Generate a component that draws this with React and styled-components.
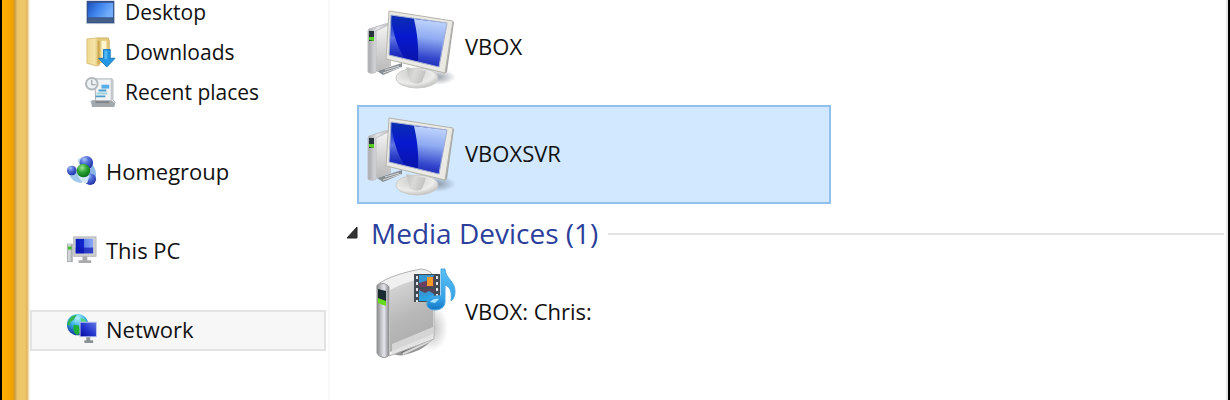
import React from 'react';
import styled, { createGlobalStyle } from 'styled-components';

const GlobalStyle = createGlobalStyle`
	* {
		box-sizing: border-box;
	}
	body {
		margin: 0;
		background: #fff;
		font-family: 'Open Sans', 'Segoe UI', sans-serif;
		overflow: hidden;
	}
`;

const Window = styled.div`
	display: flex;
	height: 100vh;
	overflow: hidden;
	border: solid #000;
	border-width: 0 2px;
	background: #fff;
`;

const Frame = styled.div`
	flex: none;
	width: 28px;
	background: linear-gradient(
		to right,
		#fdb000 0,
		#fbab00 5px,
		#f0a000 11px,
		#c99a45 13px,
		#e8c26a 15px,
		#efc768 17px,
		#efc768 23px,
		#e0b45c 25px,
		#f5e6c8 27px,
		#fff 28px
	);
`;

const Sidebar = styled.nav`
	display: flex;
	flex: none;
	flex-direction: column;
	gap: 39px;
	width: 300px;
	margin-top: -7px;
	padding-right: 2px;
	border-right: 2px solid #f9f9f9;
`;

const TreeGroup = styled.ul`
	margin: 0;
	padding: 0;
	list-style: none;
`;

const TreeItem = styled.a`
	display: flex;
	align-items: center;
	gap: 9px;
	height: 41px;
	margin-bottom: -1px;
	padding: 0 0 4px ${(props) => (props.$nested ? 53 : 34)}px;
	border: 2px solid ${(props) => (props.$active ? '#e3e3e3' : 'transparent')};
	background: ${(props) => (props.$active ? '#f7f7f7' : 'transparent')};
	color: #111;
	font-size: ${(props) => (props.$nested ? 21 : 22)}px;
	line-height: 30px;
	text-decoration: none;
	white-space: nowrap;
`;

const SmallIcon = styled.svg`
	flex: none;
	width: 31px;
	height: 31px;
`;

const Content = styled.main`
	display: flex;
	flex: 1;
	flex-direction: column;
	min-width: 0;
	margin-top: -2px;
	padding: 0 2px 0 15px;
	border-right: 2px solid #e6e6e6;
`;

const TileList = styled.div`
	display: flex;
	flex-direction: column;
	gap: 8px;
	padding-left: 12px;
`;

const Tile = styled.button`
	display: flex;
	align-items: center;
	gap: 6px;
	width: 474px;
	max-width: 100%;
	height: 99px;
	padding: 0 6px;
	border: 2px solid ${(props) => (props.$selected ? '#8fc0ee' : 'transparent')};
	background: ${(props) => (props.$selected ? '#d1e8ff' : 'transparent')};
	color: #111;
	font: 22px/30px 'Open Sans', 'Segoe UI', sans-serif;
	text-align: left;
`;

const TileLabel = styled.span`padding-bottom: 4px;`;

const LargeIcon = styled.svg`
	flex: none;
	width: 94px;
	height: 94px;
`;

const GroupHeader = styled.h2`
	display: flex;
	align-items: center;
	gap: 10px;
	height: 59px;
	margin: 0;

	&::after {
		content: '';
		flex: 1;
		height: 2px;
		background: #e4e4e4;
	}
`;

const GroupToggle = styled.button`
	display: flex;
	align-items: center;
	gap: 12px;
	padding: 0 0 2px;
	border: 0;
	background: none;
	color: #2b3f9b;
	font: 28px/38px 'Open Sans', 'Segoe UI', sans-serif;
	white-space: nowrap;
`;

const Arrow = styled.svg`
	width: 14px;
	height: 14px;
`;

const DesktopIcon = () => (
	<SmallIcon viewBox="0 0 32 32" aria-hidden="true">
		<defs>
			<linearGradient id="desk" x1="0" y1="0" x2="1" y2="0.4">
				<stop offset="0" stopColor="#1c4fb8" />
				<stop offset="0.5" stopColor="#3f84ee" />
				<stop offset="1" stopColor="#74aef8" />
			</linearGradient>
		</defs>
		<rect x="1" y="5" width="30" height="24" fill="#c3ccda" />
		<rect x="2" y="5" width="28" height="23" fill="#345089" />
		<rect x="3" y="7" width="26" height="15" fill="url(#desk)" />
		<rect x="3" y="23" width="26" height="4" fill="#465f87" />
	</SmallIcon>
);

const DownloadsIcon = () => (
	<SmallIcon viewBox="0 0 32 32" aria-hidden="true">
		<defs>
			<linearGradient id="folder" x1="0" y1="0" x2="1" y2="0">
				<stop offset="0" stopColor="#efd98f" />
				<stop offset="0.6" stopColor="#f5e4a9" />
				<stop offset="1" stopColor="#d9b860" />
			</linearGradient>
		</defs>
		<path d="M12 2h12l1 3v19l-10 4z" fill="#e5cb7c" stroke="#d0b265" />
		<path d="M17 5h5v21h-5z" fill="#fff5cf" />
		<path d="M2 3l10-1 3 2v26l-3 1-10-3z" fill="url(#folder)" stroke="#dcc27b" />
		<path d="M14 5v24" stroke="#cda84f" strokeWidth="2" />
		<path d="M19 14h7v9h5l-8.500 9-8.500-9h5z" fill="#2497e3" stroke="#1779bd" />
		<path d="M20 15h3v9h-3z" fill="#50b7f4" />
	</SmallIcon>
);

const RecentIcon = () => (
	<SmallIcon viewBox="0 0 32 32" aria-hidden="true">
		<path d="M10 3h18v21l3 3-1 4H8l-2-5h5z" fill="#f1f3f5" stroke="#a8adb1" />
		<path d="M28 4v21" stroke="#c4c8cb" strokeWidth="3" />
		<path d="M7 25h20l4 3-1 4H7z" fill="#a3a8ac" />
		<path d="M11 27h14" stroke="#7f858a" strokeWidth="2" />
		<path d="M17 9h8v4h-8z" fill="#58aee9" />
		<path d="M14 15h8M11 21h10" stroke="#4c9dc9" strokeWidth="2" />
		<path d="M12 18h11" stroke="#9dd0df" strokeWidth="2" />
		<circle cx="7" cy="8" r="6" fill="#eef2f3" stroke="#b1b7ba" strokeWidth="2" />
		<path d="M7 4v5h4" fill="none" stroke="#87969c" />
	</SmallIcon>
);

const HomegroupIcon = () => (
	<SmallIcon viewBox="0 0 32 32" aria-hidden="true">
		<defs>
			<radialGradient id="hgBlue" cx="0.35" cy="0.25" r="0.8">
				<stop offset="0" stopColor="#a9c5f4" />
				<stop offset="0.4" stopColor="#526fd9" />
				<stop offset="1" stopColor="#1c2da4" />
			</radialGradient>
			<radialGradient id="hgGreen" cx="0.4" cy="0.3" r="0.7">
				<stop offset="0" stopColor="#a2e593" />
				<stop offset="0.5" stopColor="#2ca336" />
				<stop offset="1" stopColor="#0b7317" />
			</radialGradient>
		</defs>
		<path d="M3 18c1 7 6 10 13 11l2-7-9-5z" fill="#9fc7eb" />
		<path d="M26 9c5 4 6 11 4 17l-6-7z" fill="#8bb5e6" />
		<path d="M12 5l5-3 3 7-5 4z" fill="#b4d2ef" />
		<circle cx="21" cy="8" r="7" fill="url(#hgBlue)" />
		<circle cx="6" cy="16" r="5" fill="url(#hgBlue)" />
		<circle cx="25" cy="25" r="6" fill="url(#hgBlue)" />
		<path d="M12 20c3 4 8 4 12 1l-2 8c-5 0-8-3-10-9z" fill="#d3e8f7" />
		<circle cx="18" cy="16" r="7" fill="url(#hgGreen)" />
	</SmallIcon>
);

const ThisPcIcon = () => (
	<SmallIcon viewBox="0 0 32 32" aria-hidden="true">
		<defs>
			<linearGradient id="pcScreen" x1="0" y1="0" x2="1" y2="0">
				<stop offset="0" stopColor="#0a1bc0" />
				<stop offset="0.45" stopColor="#1226cc" />
				<stop offset="0.5" stopColor="#5f80ea" />
				<stop offset="1" stopColor="#8ba9f6" />
			</linearGradient>
		</defs>
		<rect x="1" y="10" width="6" height="19" fill="#aaafb3" />
		<rect x="2" y="10" width="3" height="18" fill="#d1d4d5" />
		<rect x="2" y="13" width="4" height="3" fill="#46bd31" />
		<rect x="8" y="3" width="23" height="20" fill="#cfcfcf" stroke="#b4b5b8" />
		<rect x="10" y="5" width="18" height="15" fill="url(#pcScreen)" />
		<path d="M10 14h18v6H10z" fill="#1018b2" opacity="0.700" />
		<path d="M17 23h5v4h4v3H13v-3h4z" fill="#a8aaac" />
	</SmallIcon>
);

const NetworkIcon = () => (
	<SmallIcon viewBox="0 0 32 32" aria-hidden="true">
		<defs>
			<radialGradient id="globe" cx="0.5" cy="0.2" r="0.8">
				<stop offset="0" stopColor="#b4f4fb" />
				<stop offset="0.5" stopColor="#2fa9e6" />
				<stop offset="1" stopColor="#1235a0" />
			</radialGradient>
			<linearGradient id="netScreen" x1="0" y1="1" x2="1" y2="0">
				<stop offset="0" stopColor="#0509a0" />
				<stop offset="0.5" stopColor="#2738ce" />
				<stop offset="1" stopColor="#6177e4" />
			</linearGradient>
		</defs>
		<circle cx="12" cy="12" r="11" fill="url(#globe)" />
		<path d="M3 7c3-4 5-5 8-5l-3 5-3 2-1 4-3-1z" fill="#35b552" />
		<path d="M8 12l5 1 2 6-3 4c-4-2-5-6-4-11z" fill="#1fae3a" />
		<path d="M15 5l5 2 2 4h-6z" fill="#55d67c" />
		<rect x="14" y="9" width="18" height="16" fill="#c4caec" />
		<rect x="15" y="10" width="16" height="14" fill="url(#netScreen)" />
		<path d="M21 25h4v3h3v3h-9v-3h2z" fill="#899098" />
	</SmallIcon>
);

const ComputerIcon = () => (
	<LargeIcon viewBox="0 0 94 94" aria-hidden="true">
		<defs>
			<linearGradient id="tower" x1="0" y1="0" x2="1" y2="0">
				<stop offset="0" stopColor="#a3a5a8" />
				<stop offset="0.4" stopColor="#e6e7ea" />
				<stop offset="1" stopColor="#b4b6ba" />
			</linearGradient>
			<linearGradient id="towerSide" x1="0" y1="0" x2="0" y2="1">
				<stop offset="0" stopColor="#f6f6f6" />
				<stop offset="1" stopColor="#b8b8b8" />
			</linearGradient>
			<linearGradient id="screen" x1="0" y1="0" x2="0" y2="1">
				<stop offset="0" stopColor="#0b2fae" />
				<stop offset="0.4" stopColor="#0618cf" />
				<stop offset="1" stopColor="#0a14a2" />
			</linearGradient>
			<linearGradient id="gloss" x1="0.5" y1="0" x2="0.4" y2="1">
				<stop offset="0" stopColor="#c3d7fd" />
				<stop offset="0.4" stopColor="#8fabf2" />
				<stop offset="0.8" stopColor="#3448cc" />
				<stop offset="1" stopColor="#1c28b8" />
			</linearGradient>
			<linearGradient id="glossLeft" x1="0" y1="0" x2="0" y2="1">
				<stop offset="0" stopColor="#6f8fe4" stopOpacity="0" />
				<stop offset="0.5" stopColor="#9db4ef" stopOpacity="0.600" />
				<stop offset="1" stopColor="#3f55cf" stopOpacity="0.200" />
			</linearGradient>
			<radialGradient id="stand" cx="0.4" cy="0.3" r="0.7">
				<stop offset="0" stopColor="#cdcdcd" />
				<stop offset="0.7" stopColor="#ececea" />
				<stop offset="1" stopColor="#c4c4c2" />
			</radialGradient>
			<linearGradient id="neck" x1="0" y1="0" x2="1" y2="0.3">
				<stop offset="0" stopColor="#bdbdbb" />
				<stop offset="0.5" stopColor="#dadad8" />
				<stop offset="1" stopColor="#c2c2c0" />
			</linearGradient>
			<radialGradient id="shade">
				<stop offset="0" stopColor="#6b7682" stopOpacity="0.700" />
				<stop offset="1" stopColor="#6b7682" stopOpacity="0" />
			</radialGradient>
		</defs>
		<ellipse cx="72" cy="76" rx="19" ry="8" fill="url(#shade)" />
		<path d="M12 70l25-8v4L18 74z" fill="#888d91" />
		<path d="M20 69l14-4M18 72l18-6" stroke="#d5d7d8" />
		<path d="M10 28l16-6v43l-16 6z" fill="url(#towerSide)" />
		<path d="M4 28l16-5 7-1-16 8v41c-3 2-8 1-8 0V31c0-1 0-2 1-3z" fill="url(#tower)" stroke="#c0c1c4" strokeWidth="1" />
		<path d="M4 30h5v10H4z" fill="#27343c" />
		<path d="M4 36h5v4l-5-1z" fill="#54cf22" />
		<ellipse cx="52" cy="77" rx="21" ry="10" fill="url(#stand)" stroke="#cbcbc9" />
		<path d="M41 66l20 4-4 11c-4 3-10 2-12-1z" fill="url(#neck)" />
		<path d="M86 20l3 1-7 50-3 2z" fill="#a4a6a4" />
		<path d="M24 10l64 10-8 52-59-14z" fill="#eae9e4" stroke="#b5b4ab" />
		<path d="M26 14l56 8-8 44-50-12z" fill="url(#screen)" />
		<path d="M49 18l33 4-8 44-21-5c1-15-1-30-4-43z" fill="url(#gloss)" />
		<path d="M26 16c2 15 6 30 14 42l-16-4z" fill="url(#glossLeft)" />
		<path d="M26 14l56 8-8 44-50-12z" fill="none" stroke="#a6b2d3" strokeWidth="1" />
	</LargeIcon>
);

const MediaServerIcon = () => (
	<LargeIcon viewBox="0 0 94 94" aria-hidden="true">
		<defs>
			<linearGradient id="boxSide" x1="0" y1="0" x2="0.3" y2="1">
				<stop offset="0" stopColor="#dcdcdc" />
				<stop offset="0.6" stopColor="#b8b8b8" />
				<stop offset="1" stopColor="#adadad" />
			</linearGradient>
			<linearGradient id="boxFront" x1="0" y1="0" x2="1" y2="0">
				<stop offset="0" stopColor="#888" />
				<stop offset="0.3" stopColor="#bbbcc0" />
				<stop offset="0.6" stopColor="#e5e5ef" />
				<stop offset="1" stopColor="#858588" />
			</linearGradient>
			<linearGradient id="note" x1="0" y1="0" x2="0" y2="1">
				<stop offset="0" stopColor="#58bff5" />
				<stop offset="0.7" stopColor="#37a4e8" />
				<stop offset="1" stopColor="#1177c6" />
			</linearGradient>
			<radialGradient id="boxShade">
				<stop offset="0" stopColor="#777" stopOpacity="0.500" />
				<stop offset="1" stopColor="#777" stopOpacity="0" />
			</radialGradient>
		</defs>
		<ellipse cx="66" cy="62" rx="17" ry="24" fill="url(#boxShade)" />
		<path d="M24 87l43-22v9c-7 8-16 12-28 15-4 1-8 0-15-2z" fill="#929292" />
		<path d="M33 84l32-15M38 88l27-13" stroke="#d7d7d7" strokeWidth="2" />
		<path d="M36 86l30-14" stroke="#6f6f6f" strokeWidth="2" />
		<path d="M12 19C22 11 40 6 56 3q12 1 13 10v60L24 90l-8-4z" fill="#f0f0f0" stroke="#b2b2b2" />
		<path d="M25 24c13-7 27-11 43-14v58L25 86z" fill="url(#boxSide)" />
		<path d="M27 78l41-17v11L27 88z" fill="#dedede" opacity="0.800" />
		<path d="M12 20c2-4 10-3 12 1v68c-2 4-10 3-12-2z" fill="url(#boxFront)" stroke="#98989a" />
		<path d="M13 23l8 2v12l-8-3z" fill="#1c2a31" />
		<path d="M13 32l8 3v5l-8-3z" fill="#65d91b" />
		<path d="M49 8h26v28H49z" fill="#434c54" />
		<path d="M54 9h15v12H54zM54 23h15v12H54z" fill="#3597d4" />
		<path d="M54 17l7-2 8-5v11H54z" fill="#6d3f5e" />
		<path d="M62 11h6v9h-6z" fill="#f39a28" />
		<path d="M54 24l6 3 4-2 5 3v-5H54z" fill="#5c4258" />
		<path d="M54 31l15-3v7H54z" fill="#2ba4e6" />
		<path d="M52 10v26M72 10v26" stroke="#dfe5e8" strokeWidth="2" strokeDasharray="3 3" />
		<path
			d="M76 3h4c0 9 10 12 10 22 0 4-1 8-4 10 1-8 0-14-6-16v17c0 5-5 8-10 8s-9-3-8-7c0-5 6-8 14-7z"
			fill="url(#note)"
			stroke="#4ba6e0"
		/>
		<path d="M65 36c2-3 6-4 9-3l-4 4z" fill="#a9e2fc" />
	</LargeIcon>
);

const tree = [
	[
		{ name: 'Desktop', icon: <DesktopIcon />, nested: true },
		{ name: 'Downloads', icon: <DownloadsIcon />, nested: true },
		{ name: 'Recent places', icon: <RecentIcon />, nested: true }
	],
	[ { name: 'Homegroup', icon: <HomegroupIcon /> } ],
	[ { name: 'This PC', icon: <ThisPcIcon /> } ],
	[ { name: 'Network', icon: <NetworkIcon />, active: true } ]
];

const computers = [ { name: 'VBOX' }, { name: 'VBOXSVR', selected: true } ];

const App = () => (
	<Window>
		<GlobalStyle />
		<Frame />
		<Sidebar>
			{tree.map((group) => (
				<TreeGroup key={group[0].name}>
					{group.map((item) => (
						<li key={item.name}>
							<TreeItem href="#" $nested={item.nested} $active={item.active}>
								{item.icon}
								{item.name}
							</TreeItem>
						</li>
					))}
				</TreeGroup>
			))}
		</Sidebar>
		<Content>
			<TileList>
				{computers.map((computer) => (
					<Tile key={computer.name} type="button" $selected={computer.selected}>
						<ComputerIcon />
						<TileLabel>{computer.name}</TileLabel>
					</Tile>
				))}
			</TileList>
			<GroupHeader>
				<GroupToggle type="button" aria-expanded="true">
					<Arrow viewBox="0 0 14 14" aria-hidden="true">
						<path d="M12 1v11H2z" fill="#333" stroke="#222" />
					</Arrow>
					Media Devices (1)
				</GroupToggle>
			</GroupHeader>
			<TileList>
				<Tile type="button">
					<MediaServerIcon />
					<TileLabel>VBOX: Chris:</TileLabel>
				</Tile>
			</TileList>
		</Content>
	</Window>
);

export default App;
